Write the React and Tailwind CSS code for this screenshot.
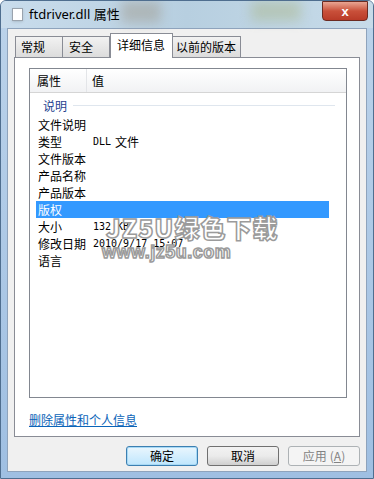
import React from "react";

const cjk = { fontFamily: '"Noto Sans CJK SC", "Noto Sans", sans-serif' };
const mono = { fontFamily: '"DejaVu Sans Mono", "Liberation Mono", monospace' };

function Row({ label, value, cjkValue, selected }) {
  return (
    <div className={`flex items-center h-[17px] ml-[6px] w-[293px] ${selected ? "bg-[#3399ff] text-white" : "text-black"}`}>
      <span className="w-[57px] pl-[2px] text-[12px] leading-[17px] whitespace-nowrap">{label}</span>
      {value ? (
        <span className="text-[10px] leading-[17px] whitespace-nowrap text-black" style={mono}>{value}</span>
      ) : null}
      {cjkValue ? (
        <span className="ml-[4px] text-[12px] leading-[17px] whitespace-nowrap text-black">{cjkValue}</span>
      ) : null}
    </div>
  );
}

export default function App() {
  return (
    <div
      className="w-[374px] h-[479px] relative overflow-hidden flex flex-col bg-gradient-to-b from-[#bcd3ea] to-[#9fbfe2] border border-[#4f6e8f] rounded-t-[6px]"
      style={cjk}
    >
      {/* Title bar */}
      <div className="h-[27px] shrink-0 relative flex items-center bg-gradient-to-r from-[#c9dcec] via-[#b7cfe0] to-[#c7dbe9]">
        <div className="absolute left-[120px] top-0 w-[40px] h-[22px] bg-[#9a8f7c] opacity-40 blur-[6px]" />
        <div className="absolute left-[250px] top-0 w-[50px] h-[20px] bg-[#a7b27a] opacity-40 blur-[6px]" />
        <div className="ml-[11px] w-[11px] h-[13px] bg-white border border-[#9aa3ad] shadow-sm relative z-10" />
        <span className="ml-[6px] text-[13px] text-black relative z-10" style={{ fontFamily: '"Noto Sans", "Noto Sans CJK SC", sans-serif' }}>
          ftdriver.dll 属性
        </span>
        <div className="absolute right-[5px] top-0 w-[46px] h-[20px] rounded-b-[4px] border border-[#6b2b22] bg-gradient-to-b from-[#e8a593] via-[#c9503a] to-[#b93b28] flex items-center justify-center z-10">
          <span className="text-white text-[13px] font-bold leading-none" style={{ fontFamily: '"Liberation Sans", sans-serif' }}>x</span>
        </div>
      </div>

      {/* Client area */}
      <div className="mx-[6px] mb-[6px] flex-1 bg-[#f0f0f0] border border-[#8ea3bc] flex flex-col">
        {/* Tabs */}
        <div className="flex items-end pl-[7px] pt-[4px] h-[28px] relative z-10">
          <div className="w-[48px] h-[21px] border border-[#898c95] border-b-0 bg-gradient-to-b from-[#f2f2f2] to-[#dcdcdc] text-[12px] leading-[20px] pl-[5px]">常规</div>
          <div className="w-[47px] h-[21px] border border-[#898c95] border-l-0 border-b-0 bg-gradient-to-b from-[#f2f2f2] to-[#dcdcdc] text-[12px] leading-[20px] pl-[6px]">安全</div>
          <div className="w-[63px] h-[25px] -mb-px border border-[#898c95] border-b-0 bg-white text-[12px] leading-[22px] pl-[6px]">详细信息</div>
          <div className="w-[68px] h-[21px] border border-[#898c95] border-l-0 border-b-0 bg-gradient-to-b from-[#f2f2f2] to-[#dcdcdc] text-[12px] leading-[20px] pl-[3px]">以前的版本</div>
        </div>

        {/* Tab panel */}
        <div className="mx-[6px] h-[380px] bg-white border border-[#898c95] flex flex-col">
          {/* List view */}
          <div className="mt-[10px] ml-[14px] mr-[12px] h-[330px] border border-[#828790] relative">
            <div className="h-[24px] flex items-center bg-gradient-to-b from-white to-[#f1f2f4] border-b border-[#d5d5d5]">
              <div className="w-[57px] h-full flex items-center pl-[7px] border-r border-[#e3e5e8] text-[12px]">属性</div>
              <div className="pl-[5px] text-[12px]">值</div>
            </div>
            <div className="h-[21px] flex items-center mt-[2px]">
              <span className="ml-[13px] text-[12px] text-[#1e3f8f]">说明</span>
              <div className="ml-[6px] w-[262px] h-px bg-[#dfe6ee]" />
            </div>
            <Row label="文件说明" />
            <Row label="类型" value="DLL" cjkValue="文件" />
            <Row label="文件版本" />
            <Row label="产品名称" />
            <Row label="产品版本" />
            <Row label="版权" selected />
            <Row label="大小" value="132 KB" />
            <Row label="修改日期" value="2010/9/17 15:07" />
            <Row label="语言" />

            {/* Watermark overlay */}
            <div className="absolute left-[76px] top-[145px] pointer-events-none flex flex-col items-start">
              <span
                className="text-[25px] font-black leading-[27px] text-white tracking-[1px] [-webkit-text-stroke:1.5px_#9b9b9b]"
                style={{ fontFamily: '"Noto Sans CJK SC", "Liberation Sans", sans-serif' }}
              >
                JZ5U绿色下载
              </span>
              <span
                className="mt-[2px] text-[18px] font-black leading-[18px] text-white -ml-[4px] tracking-[0.5px] [-webkit-text-stroke:1.5px_#9b9b9b]"
                style={{ fontFamily: '"Liberation Sans", sans-serif' }}
              >
                www.jz5u.com
              </span>
            </div>
          </div>

          <div className="mt-[8px] ml-[14px]">
            <span className="text-[12px] text-[#0b64b8] underline">删除属性和个人信息</span>
          </div>
        </div>

        {/* Buttons */}
        <div className="flex justify-end gap-[9px] mt-[9px] mr-[6px]">
          <div className="w-[72px] h-[20px] rounded-[3px] border border-[#3c7fb1] bg-gradient-to-b from-[#eaf6fd] to-[#bee6fd] shadow-[inset_0_0_0_1px_#a7d9f5] flex items-center justify-center text-[12px]">确定</div>
          <div className="w-[72px] h-[20px] rounded-[3px] border border-[#707070] bg-gradient-to-b from-[#f2f2f2] via-[#ebebeb] to-[#cfcfcf] flex items-center justify-center text-[12px]">取消</div>
          <div className="w-[72px] h-[20px] rounded-[3px] border border-[#adb2b5] bg-[#f4f4f4] flex items-center justify-center text-[12px] text-[#838383]">
            应用 <span className="ml-[3px]">(<span className="underline">A</span>)</span>
          </div>
        </div>
      </div>
    </div>
  );
}
